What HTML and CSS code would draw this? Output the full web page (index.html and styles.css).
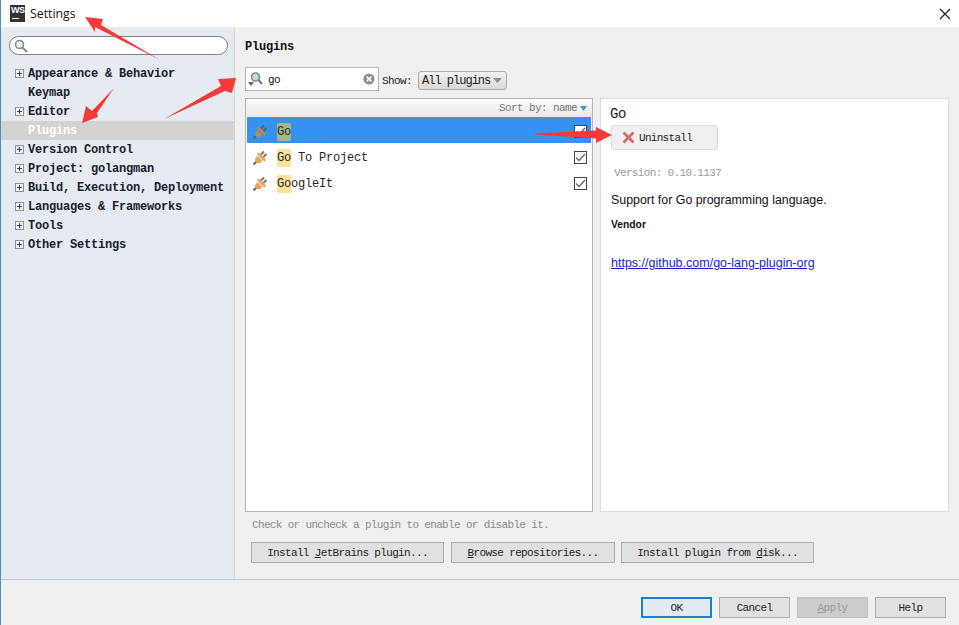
FILE: index.html
```html
<!DOCTYPE html>
<html lang="en">
<head>
<meta charset="utf-8">
<title>Settings</title>
<link rel="stylesheet" href="styles.css">
</head>
<body>
<div class="window">
  <header class="titlebar">
    <div class="logo"><span class="logo-text">WS</span><span class="logo-bar"></span></div>
    <span class="title">Settings</span>
    <svg class="close" width="12" height="12" viewBox="0 0 12 12"><path d="M1 1 11 11M11 1 1 11" stroke="#222" stroke-width="1.2" fill="none"/></svg>
  </header>
  <div class="main">
    <aside class="sidebar">
      <div class="side-search">
        <svg width="14" height="14" viewBox="0 0 14 14"><circle cx="5.5" cy="5.5" r="4" fill="#e8eef2" stroke="#8a8a8a" stroke-width="1.6"/><path d="M8.5 8.5 13 13" stroke="#8a8a8a" stroke-width="2.2"/></svg>
      </div>
      <ul class="tree">
        <li class="node"><span class="plus"></span>Appearance &amp; Behavior</li>
        <li class="node"><span class="noplus"></span>Keymap</li>
        <li class="node"><span class="plus"></span>Editor</li>
        <li class="node current"><span class="noplus"></span>Plugins</li>
        <li class="node"><span class="plus"></span>Version Control</li>
        <li class="node"><span class="plus"></span>Project: golangman</li>
        <li class="node"><span class="plus"></span>Build, Execution, Deployment</li>
        <li class="node"><span class="plus"></span>Languages &amp; Frameworks</li>
        <li class="node"><span class="plus"></span>Tools</li>
        <li class="node"><span class="plus"></span>Other Settings</li>
      </ul>
    </aside>
    <section class="content">
      <h1 class="heading">Plugins</h1>
      <div class="toolbar">
        <div class="filter">
          <svg class="filter-icon" width="15" height="17" viewBox="0 0 15 17"><circle cx="7.5" cy="6" r="4" fill="#bcdbe4" stroke="#7d8c92" stroke-width="1.6"/><path d="M10.5 9 14 13" stroke="#777" stroke-width="2"/><path d="M0 11h6l-3 4z" fill="#666"/></svg>
          <span class="filter-text">go</span>
          <svg class="filter-clear" width="12" height="12" viewBox="0 0 12 12"><circle cx="6" cy="6" r="5.6" fill="#8f8f8f"/><path d="M3.6 3.6 8.4 8.4M8.4 3.6 3.6 8.4" stroke="#fff" stroke-width="1.6"/></svg>
        </div>
        <span class="show-label">Show:</span>
        <div class="combo"><span>All plugins</span><svg width="9" height="5" viewBox="0 0 9 5"><path d="M0 0h9L4.500 5z" fill="#8d8d8d"/></svg></div>
      </div>
      <div class="panels">
        <div class="list">
          <div class="list-head"><span>Sort by: name</span><svg width="7" height="5" viewBox="0 0 7 5"><path d="M0 0h7L3.500 5z" fill="#3d9bc4"/></svg></div>
          <div class="row selected">
            <svg class="plug" width="15" height="15" viewBox="0 0 15 15"><path d="M0.500 14.500 4 11" stroke="#5d5d5d" stroke-width="2"/><path d="M4.500 6 9.500 11 7 13Q4.500 14 2.500 12 1.500 10 2.500 8Z" fill="#b9895a"/><path d="M5.500 4 11.500 10" stroke="#b9895a" stroke-width="2.600" stroke-linecap="round"/><path d="M8 4.500 11 1.500M10.500 7 13.500 4" stroke="#5d5d5d" stroke-width="2"/></svg>
            <span class="name"><mark class="hit">Go</mark></span>
            <span class="check"><svg width="11" height="9" viewBox="0 0 11 9"><path d="M1 4.500 4 7.500 10 1" stroke="#666" stroke-width="1.300" fill="none"/></svg></span>
          </div>
          <div class="row">
            <svg class="plug" width="15" height="15" viewBox="0 0 15 15"><path d="M0.500 14.500 4 11" stroke="#666" stroke-width="2"/><path d="M4.500 6 9.500 11 7 13Q4.500 14 2.500 12 1.500 10 2.500 8Z" fill="#e8a55e"/><path d="M5.500 4 11.500 10" stroke="#e8a55e" stroke-width="2.600" stroke-linecap="round"/><path d="M8 4.500 11 1.500M10.500 7 13.500 4" stroke="#777" stroke-width="2"/></svg>
            <span class="name"><mark class="hit">Go</mark> To Project</span>
            <span class="check"><svg width="11" height="9" viewBox="0 0 11 9"><path d="M1 4.500 4 7.500 10 1" stroke="#666" stroke-width="1.300" fill="none"/></svg></span>
          </div>
          <div class="row">
            <svg class="plug" width="15" height="15" viewBox="0 0 15 15"><path d="M0.500 14.500 4 11" stroke="#666" stroke-width="2"/><path d="M4.500 6 9.500 11 7 13Q4.500 14 2.500 12 1.500 10 2.500 8Z" fill="#e8a55e"/><path d="M5.500 4 11.500 10" stroke="#e8a55e" stroke-width="2.600" stroke-linecap="round"/><path d="M8 4.500 11 1.500M10.500 7 13.500 4" stroke="#777" stroke-width="2"/></svg>
            <span class="name"><mark class="hit">Go</mark>ogleIt</span>
            <span class="check"><svg width="11" height="9" viewBox="0 0 11 9"><path d="M1 4.500 4 7.500 10 1" stroke="#666" stroke-width="1.300" fill="none"/></svg></span>
          </div>
        </div>
        <div class="splitter"><span class="grip"></span></div>
        <div class="details">
          <div class="plugin-title">Go</div>
          <button class="uninstall" type="button">
            <svg width="13" height="13" viewBox="0 0 13 13"><path d="M1.500 1.500 11.500 11.500M11.500 1.500 1.500 11.500" stroke="#dc6a5e" stroke-width="2.800"/></svg>
            <span>Uninstall</span>
          </button>
          <div class="version">Version: 0.10.1137</div>
          <p class="desc">Support for Go programming language.</p>
          <div class="vendor">Vendor</div>
          <a class="link" href="#">https://github.com/go-lang-plugin-org</a>
        </div>
      </div>
      <div class="hint">Check or uncheck a plugin to enable or disable it.</div>
      <div class="actions">
        <button class="btn wide-a" type="button">Install <u>J</u>etBrains plugin...</button>
        <button class="btn wide-b" type="button"><u>B</u>rowse repositories...</button>
        <button class="btn wide-a" type="button">Install plugin from <u>d</u>isk...</button>
      </div>
    </section>
  </div>
  <footer class="footer">
    <button class="btn dlg primary" type="button">OK</button>
    <button class="btn dlg" type="button">Cancel</button>
    <button class="btn dlg disabled" type="button"><u>A</u>pply</button>
    <button class="btn dlg" type="button">Help</button>
  </footer>
  <svg class="annotations" width="959" height="625" viewBox="0 0 959 625">
    <path d="M85 17 103 19 101 25 160 60 95 27 95 32Z"/>
    <path d="M82 123 86 106 92 111 114 88 97 113 98 117Z"/>
    <path d="M236 78 218 79 221 86 164 119 225 91 232 93Z"/>
    <path d="M612 135 596 127 596 130.500 535 133.500 535 134.500 596 138.500 596 143Z"/>
  </svg>
</div>
</body>
</html>
```

FILE: styles.css
```css
* { box-sizing: border-box; }
html, body { margin: 0; padding: 0; }
body { font-family: "Liberation Mono", monospace; font-size: 11px; color: #111; background: #f0f0f0; }

.window { position: relative; width: 959px; height: 625px; display: flex; flex-direction: column; border-left: 1px solid #4a8fc0; overflow: hidden; background: #f0f0f0; }

.titlebar { height: 27px; flex: none; background: #fff; display: flex; align-items: center; padding-left: 9px; }
.logo { width: 15px; height: 17px; background: #2f3236; display: flex; flex-direction: column; margin-right: 5px; padding: 1px 0 0 1px; }
.logo-text { font: bold 9px/9px "Liberation Sans", sans-serif; color: #fff; letter-spacing: -0.4px; }
.logo-bar { width: 7px; height: 1px; background: #fff; margin: 3px 0 0 1px; }
.title { font: 12.300px "Open Sans", sans-serif; color: #111; margin-top: -1px; }
.close { margin-left: auto; margin-right: 8px; }

.main { flex: 1; display: flex; min-height: 0; border-bottom: 1px solid #c6c6c6; }

.sidebar { width: 234px; flex: none; background: #e6ebf1; border-right: 1px solid #d0d3d6; padding-top: 9px; }
.side-search { margin: 0 6px 0 8px; height: 19px; border: 1px solid #7f7f7f; border-radius: 10px; background: #fff; display: flex; align-items: center; padding-left: 4px; }
.tree { list-style: none; margin: 9px 0 0; padding: 0; }
.node { height: 19px; display: flex; align-items: center; padding: 2px 0 0 14px; font: bold 12px/17px "Liberation Mono", monospace; letter-spacing: -0.2px; color: #16202c; white-space: pre; }
.node.current { background: #d3d3d3; color: #fff; }
.plus { width: 9px; height: 9px; margin: -2px 4px 0 0; border: 1px solid #8c8f96; background: linear-gradient(#2b3e70, #2b3e70) center / 5px 1px no-repeat, linear-gradient(#2b3e70, #2b3e70) center / 1px 5px no-repeat, #f4f6f8; flex: none; }
.noplus { width: 9px; margin-right: 4px; flex: none; }

.content { flex: 1; min-width: 0; padding: 10px 10px 0 10px; }
.heading { margin: 0; height: 18px; padding-top: 1px; font: bold 12px/18px "Liberation Mono", monospace; letter-spacing: -0.2px; color: #111; }

.toolbar { margin-top: 12px; height: 24px; display: flex; align-items: center; }
.filter { width: 134px; height: 24px; background: #fff; border: 1px solid #b4b4b4; display: flex; align-items: center; padding: 0 3px 0 2px; }
.filter-text { margin-left: 5px; padding-top: 2px; flex: 1; letter-spacing: -0.6px; color: #111; }
.show-label { margin-left: 3px; padding-top: 4px; letter-spacing: -0.6px; color: #222; }
.combo { margin-left: 6px; margin-top: 3px; width: 89px; height: 19px; border: 1px solid #aaa; border-radius: 3px; background: linear-gradient(#f2f2f2, #d9d9d9); display: flex; align-items: center; padding-left: 3px; gap: 3px; font-size: 12px; letter-spacing: -1px; color: #222; }

.panels { margin-top: 7px; height: 414px; display: flex; }
.list { width: 348px; flex: none; background: #fff; border: 1px solid #b4b4b4; }
.list-head { height: 18px; background: linear-gradient(#fbfbfb, #e9e9e9); display: flex; align-items: center; justify-content: flex-end; padding-right: 5px; gap: 4px; color: #777; letter-spacing: -0.6px; }
.list-head span { margin-right: -1px; }
.row { height: 26px; margin: 0 1px; padding: 2px 4px 0 6px; display: flex; align-items: center; font-size: 12px; letter-spacing: -0.2px; color: #222; white-space: pre; }
.row.selected { background: #3592f2; color: #1c2a1c; }
.plug { flex: none; margin-right: 9px; }
.name { flex: 1; padding-top: 2px; }
.hit { background: #fde296; color: inherit; border-radius: 2px; padding: 2px 0; }
.selected .hit { background: #a4b889; }
.check { width: 13px; height: 13px; flex: none; border: 1px solid #444; background: #fff; display: flex; align-items: center; justify-content: center; }

.splitter { width: 7px; flex: none; display: flex; align-items: center; justify-content: center; }
.grip { width: 3px; height: 13px; background: radial-gradient(#aaa 45%, transparent 50%) 0 0 / 2px 2px; }

.details { flex: 1; background: #fff; border: 1px solid #dcdcdc; padding: 5px 10px 0; }
.plugin-title { height: 18px; padding-top: 1px; font-size: 14px; line-height: 18px; letter-spacing: -0.4px; margin-left: -1px; color: #222; }
.uninstall { display: flex; align-items: center; gap: 4px; margin-top: 3px; width: 107px; height: 25px; padding: 0 0 0 10px; border: 1px solid #dcdcdc; border-radius: 3px; background: #f0f0f0; font: 11px "Liberation Mono", monospace; letter-spacing: -0.7px; color: #222; }
.version { margin-top: 16px; height: 13px; line-height: 14px; padding-left: 3px; color: #999; letter-spacing: -0.65px; }
.desc { margin: 13px 0 0; font: 12.400px/16px "Liberation Sans", sans-serif; color: #111; }
.vendor { margin-top: 10px; font: bold 10.300px/14px "Liberation Sans", sans-serif; color: #111; }
.link { display: block; margin-top: 23px; font: 12.500px/16px "Liberation Sans", sans-serif; color: #1a1add; }

.hint { height: 24px; padding-top: 1px; line-height: 24px; margin-left: 7px; color: #8a8a8a; letter-spacing: -0.66px; }
.actions { margin-top: 6px; padding-left: 6px; display: flex; gap: 7px; }

.btn { height: 21px; padding: 1px 0 0; border: 1px solid #adadad; background: #e1e1e1; font: 11px "Liberation Mono", monospace; letter-spacing: -0.65px; color: #222; text-align: center; }
.wide-a { width: 193px; }
.wide-b { width: 164px; }
.wide-b + .wide-a { margin-left: -1px; }

.footer { height: 45px; flex: none; display: flex; justify-content: flex-end; gap: 7px; padding: 17px 13px 0 0; }
.dlg { width: 71px; }
.primary { border: 2px solid #1a7fd0; background: #e3eaf2; }
.disabled { background: #cccccc; border-color: #c0c0c0; color: #999; }

.annotations { position: absolute; left: -1px; top: 0; pointer-events: none; }
.annotations path { fill: #f23a38; }
```
